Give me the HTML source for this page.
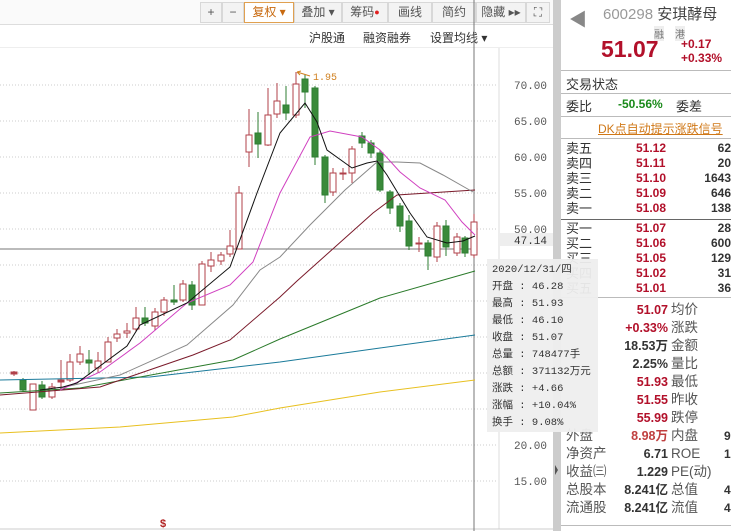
<!DOCTYPE html>
<html><head><meta charset="utf-8"><style>
*{margin:0;padding:0;box-sizing:border-box}
body{width:731px;height:531px;overflow:hidden;background:#fff;font-family:"Liberation Sans","Noto Sans CJK SC",sans-serif;position:relative;font-size:12px;color:#333}
.abs{position:absolute;white-space:nowrap}
.tb{position:absolute;top:0;left:0;width:553px;height:25px;background:#fafafa;border-bottom:1px solid #ddd}
.btn{position:absolute;top:2px;height:21px;border:1px solid #d8d8d8;background:#f3f3f3;font-size:12px;color:#555;text-align:center;line-height:19px}
.rp{position:absolute;left:560px;top:0;width:171px;height:531px;background:#fff;border-left:1px solid #ccc}
.r{color:#b2102a;font-weight:bold}
.g{color:#1a8a1a;font-weight:bold}
.hl{position:absolute;left:0;width:171px;border-top:1px solid #bbb}
.tip{position:absolute;z-index:5;left:487px;top:259px;width:111px;height:173px;background:rgba(238,238,238,.95);font-family:"Liberation Mono","Noto Sans CJK SC",monospace;font-size:10.5px;color:#333;padding:3px 0 0 5px;line-height:17px;white-space:nowrap}
</style></head><body>
<div class="tb"></div>
<div class="btn" style="left:200px;width:22px">+</div>
<div class="btn" style="left:222px;width:22px">−</div>
<div class="btn" style="left:244px;width:50px;border-color:#e0a050;background:#fff;color:#c86a10">复权 ▾</div>
<div class="btn" style="left:294px;width:48px">叠加 ▾</div>
<div class="btn" style="left:342px;width:46px">筹码<span style="color:#e02020;font-size:9px;vertical-align:top">●</span></div>
<div class="btn" style="left:388px;width:44px">画线</div>
<div class="btn" style="left:432px;width:44px">简约</div>
<div class="btn" style="left:476px;width:50px">隐藏 ▸▸</div>
<div class="btn" style="left:526px;width:24px">⛶</div>
<div class="abs" style="left:0;top:47px;width:553px;border-top:1px solid #eee"></div>
<div class="abs" style="left:309px;top:29px;font-size:12px;color:#333">沪股通</div>
<div class="abs" style="left:363px;top:29px;font-size:12px;color:#333">融资融券</div>
<div class="abs" style="left:430px;top:29px;font-size:12px;color:#333">设置均线 ▾</div>

<svg class="abs" style="left:0;top:0" width="560" height="531">
<g stroke="#ccc" stroke-dasharray="1,2" stroke-width="1">
<line x1="0" y1="85" x2="498" y2="85"/><line x1="0" y1="121" x2="498" y2="121"/><line x1="0" y1="157" x2="498" y2="157"/><line x1="0" y1="193" x2="498" y2="193"/><line x1="0" y1="229" x2="498" y2="229"/><line x1="0" y1="265" x2="498" y2="265"/><line x1="0" y1="301" x2="498" y2="301"/><line x1="0" y1="337" x2="498" y2="337"/><line x1="0" y1="373" x2="498" y2="373"/><line x1="0" y1="409" x2="498" y2="409"/><line x1="0" y1="445" x2="498" y2="445"/><line x1="0" y1="481" x2="498" y2="481"/>
</g>
<line x1="499" y1="48" x2="499" y2="529" stroke="#ddd"/>
<line x1="0" y1="529" x2="553" y2="529" stroke="#ccc"/>
<line x1="0" y1="249" x2="476" y2="249" stroke="#777"/>
<line x1="474" y1="0" x2="474" y2="531" stroke="#777"/>
<rect x="553" y="0" width="7" height="531" fill="#ccc"/>
<path d="M555 465 L558 470 L555 475Z" fill="#555"/>
<g stroke="#b0404a" fill="#fff">
<line x1="14" y1="371" x2="14" y2="376"/><rect x="11" y="372" width="6" height="2" fill="#b0404a"/>
<line x1="33" y1="384" x2="33" y2="410"/><rect x="30" y="384" width="6" height="26"/>
<line x1="52" y1="383" x2="52" y2="399"/><rect x="49" y="387" width="6" height="10"/>
<line x1="61" y1="360" x2="61" y2="390"/><rect x="58" y="380" width="6" height="2" fill="#b0404a"/>
<line x1="70" y1="354" x2="70" y2="382"/><rect x="67" y="362" width="6" height="18"/>
<line x1="80" y1="346" x2="80" y2="365"/><rect x="77" y="354" width="6" height="8"/>
<line x1="98" y1="352" x2="98" y2="373"/><rect x="95" y="361" width="6" height="7"/>
<line x1="108" y1="337" x2="108" y2="362"/><rect x="105" y="342" width="6" height="20"/>
<line x1="117" y1="329" x2="117" y2="342"/><rect x="114" y="334" width="6" height="4"/>
<line x1="127" y1="323" x2="127" y2="338"/><rect x="124" y="331" width="6" height="2"/>
<line x1="136" y1="307" x2="136" y2="332"/><rect x="133" y="318" width="6" height="11"/>
<line x1="155" y1="308" x2="155" y2="330"/><rect x="152" y="312" width="6" height="14"/>
<line x1="164" y1="297" x2="164" y2="316"/><rect x="161" y="300" width="6" height="12"/>
<line x1="183" y1="280" x2="183" y2="302"/><rect x="180" y="284" width="6" height="16"/>
<line x1="202" y1="261" x2="202" y2="305"/><rect x="199" y="264" width="6" height="41"/>
<line x1="211" y1="252" x2="211" y2="272"/><rect x="208" y="260" width="6" height="6"/>
<line x1="221" y1="252" x2="221" y2="265"/><rect x="218" y="255" width="6" height="6"/>
<line x1="230" y1="230" x2="230" y2="257"/><rect x="227" y="246" width="6" height="8"/>
<line x1="239" y1="186" x2="239" y2="249"/><rect x="236" y="193" width="6" height="56"/>
<line x1="249" y1="109" x2="249" y2="167"/><rect x="246" y="135" width="6" height="17"/>
<line x1="268" y1="88" x2="268" y2="146"/><rect x="265" y="115" width="6" height="30"/>
<line x1="277" y1="83" x2="277" y2="118"/><rect x="274" y="101" width="6" height="13"/>
<line x1="296" y1="72" x2="296" y2="118"/><rect x="293" y="84" width="6" height="31"/>
<line x1="333" y1="168" x2="333" y2="196"/><rect x="330" y="173" width="6" height="19"/>
<line x1="343" y1="168" x2="343" y2="180"/><rect x="340" y="173" width="6" height="1" fill="#b0404a"/>
<line x1="352" y1="146" x2="352" y2="183"/><rect x="349" y="149" width="6" height="24"/>
<line x1="419" y1="237" x2="419" y2="252"/><rect x="416" y="243" width="6" height="1" fill="#b0404a"/>
<line x1="437" y1="222" x2="437" y2="262"/><rect x="434" y="226" width="6" height="31"/>
<line x1="457" y1="233" x2="457" y2="256"/><rect x="454" y="237" width="6" height="16"/>
<line x1="474" y1="214" x2="474" y2="258"/><rect x="471" y="222" width="6" height="33"/>
</g>
<g stroke="#2e7d32" fill="#3a8a3a">
<line x1="23" y1="378" x2="23" y2="392"/><rect x="20" y="380" width="6" height="10"/>
<line x1="42" y1="381" x2="42" y2="399"/><rect x="39" y="385" width="6" height="12"/>
<line x1="89" y1="350" x2="89" y2="375"/><rect x="86" y="360" width="6" height="3"/>
<line x1="145" y1="307" x2="145" y2="326"/><rect x="142" y="318" width="6" height="5"/>
<line x1="174" y1="285" x2="174" y2="305"/><rect x="171" y="300" width="6" height="2"/>
<line x1="192" y1="281" x2="192" y2="310"/><rect x="189" y="285" width="6" height="20"/>
<line x1="258" y1="112" x2="258" y2="158"/><rect x="255" y="133" width="6" height="11"/>
<line x1="286" y1="86" x2="286" y2="120"/><rect x="283" y="105" width="6" height="8"/>
<line x1="305" y1="74" x2="305" y2="108"/><rect x="302" y="79" width="6" height="13"/>
<line x1="315" y1="86" x2="315" y2="165"/><rect x="312" y="88" width="6" height="69"/>
<line x1="325" y1="155" x2="325" y2="203"/><rect x="322" y="157" width="6" height="38"/>
<line x1="362" y1="132" x2="362" y2="148"/><rect x="359" y="136" width="6" height="7"/>
<line x1="371" y1="140" x2="371" y2="158"/><rect x="368" y="143" width="6" height="10"/>
<line x1="380" y1="150" x2="380" y2="192"/><rect x="377" y="153" width="6" height="37"/>
<line x1="390" y1="190" x2="390" y2="214"/><rect x="387" y="192" width="6" height="16"/>
<line x1="400" y1="203" x2="400" y2="232"/><rect x="397" y="206" width="6" height="20"/>
<line x1="409" y1="215" x2="409" y2="250"/><rect x="406" y="221" width="6" height="25"/>
<line x1="428" y1="240" x2="428" y2="270"/><rect x="425" y="243" width="6" height="13"/>
<line x1="446" y1="220" x2="446" y2="256"/><rect x="443" y="226" width="6" height="21"/>
<line x1="465" y1="236" x2="465" y2="257"/><rect x="462" y="238" width="6" height="15"/>
</g>
<g fill="none" stroke-width="1">
<polyline stroke="#e8c020" points="0,433 120,427 233,417 280,408 380,392 475,380"/>
<polyline stroke="#1a7a9a" points="0,380 150,377 280,362 380,348 475,335"/>
<polyline stroke="#2a7a2a" points="0,393 80,388 233,360 280,339 380,298 475,271"/>
<polyline stroke="#7a1a2a" points="0,395 100,387 193,355 230,340 280,297 297,281 373,213 397,195 475,190"/>
<polyline stroke="#888" points="60,388 120,375 187,345 233,305 260,270 280,257 310,225 345,190 377,162 397,162 420,163 443,175 473,192"/>
<polyline stroke="#d040c0" points="60,390 100,372 140,343 187,303 230,285 253,262 280,193 310,137 330,131 362,137 380,150 400,172 420,188 445,200 462,222 475,235"/>
<polyline stroke="#111" points="40,390 63,387 77,383 127,346 140,325 187,303 230,267 257,193 280,133 305,103 317,122 327,150 352,168 367,163 377,161 387,175 410,213 427,237 447,243 463,241 475,236"/>
</g>
<path d="M297 72 L310 76" stroke="#d08020" fill="none"/><path d="M297 72 l4 -1 M297 72 l3 3" stroke="#d08020"/>
<text x="313" y="80" font-size="10" fill="#d08020" font-family="Liberation Mono,monospace">1.95</text>
<g font-family="Liberation Mono,monospace" font-size="11" fill="#555">
<text x="514" y="89">70.00</text><text x="514" y="125">65.00</text><text x="514" y="161">60.00</text><text x="514" y="197">55.00</text><text x="514" y="233">50.00</text>
<rect x="500" y="233" width="53" height="13" fill="#eee"/><text x="514" y="244" fill="#333">47.14</text>
<text x="514" y="449">20.00</text><text x="514" y="485">15.00</text>
</g>
<text x="160" y="527" font-size="11" font-weight="bold" fill="#b02020">$</text>
</svg>

<div class="rp">
<div class="abs" style="left:8px;top:6px;font-size:18px;color:#888">◀</div>
<div class="abs" style="left:42px;top:3px;font-size:15px;color:#999">600298 <span style="color:#444">安琪酵母</span></div>
<div class="abs" style="left:93px;top:26px;font-size:10px;color:#777;background:#eee">融</div>
<div class="abs" style="left:114px;top:26px;font-size:10px;color:#777;background:#eee">港</div>
<div class="abs r" style="left:40px;top:36px;font-size:23px">51.07</div>
<div class="abs r" style="left:120px;top:37px;font-size:12px;line-height:14px">+0.17<br>+0.33%</div>
<div class="hl" style="top:70px"></div>
<div class="abs" style="left:5px;top:74px;font-size:13px">交易状态</div>
<div class="hl" style="top:93px"></div>
<div class="abs" style="left:5px;top:96px;font-size:13px">委比</div>
<div class="abs g" style="left:57px;top:97px;font-size:12px">-50.56%</div>
<div class="abs" style="left:115px;top:96px;font-size:13px">委差</div>
<div class="hl" style="top:116px"></div>
<div class="abs" style="left:37px;top:120px;font-size:12px;color:#d07818;text-decoration:underline">DK点自动提示涨跌信号</div>
<div class="hl" style="top:138px"></div>
<div class="abs" style="left:5px;top:141px;font-size:13px;line-height:15px">卖五<br>卖四<br>卖三<br>卖二<br>卖一</div>
<div class="abs r" style="left:75px;top:141px;font-size:12px;line-height:15px">51.12<br>51.11<br>51.10<br>51.09<br>51.08</div>
<div class="abs" style="right:0;top:141px;font-size:12px;line-height:15px;text-align:right;font-weight:bold;color:#333">62<br>20<br>1643<br>646<br>138</div>
<div class="hl" style="top:219px;border-color:#666"></div>
<div class="abs" style="left:5px;top:221px;font-size:13px;line-height:15px">买一<br>买二<br>买三<br>买四<br>买五</div>
<div class="abs r" style="left:75px;top:221px;font-size:12px;line-height:15px">51.07<br>51.06<br>51.05<br>51.02<br>51.01</div>
<div class="abs" style="right:0;top:221px;font-size:12px;line-height:15px;text-align:right;font-weight:bold;color:#333">28<br>600<br>129<br>31<br>36</div>
<div class="hl" style="top:297px"></div>
<div class="abs" style="right:63px;top:301px;font-size:12.5px;line-height:18px;text-align:right;font-weight:bold"><span class="r">51.07</span><br><span class="r">+0.33%</span><br><span style="color:#333">18.53万</span><br><span style="color:#333">2.25%</span><br><span class="r">51.93</span><br><span class="r">51.55</span><br><span class="r">55.99</span><br><span style="color:#c04040">8.98万</span><br><span style="color:#333">6.71</span><br><span style="color:#333">1.229</span><br><span style="color:#333">8.241亿</span><br><span style="color:#333">8.241亿</span></div>
<div class="abs" style="left:5px;top:427px;font-size:13.5px;line-height:18px;color:#555">外盘<br>净资产<br>收益㈢<br>总股本<br>流通股</div>
<div class="abs" style="left:110px;top:301px;font-size:13.5px;line-height:18px;color:#555">均价<br>涨跌<br>金额<br>量比<br>最低<br>昨收<br>跌停<br>内盘<br>ROE<br>PE(动)<br>总值<br>流值</div>
<div class="abs" style="left:163px;top:427px;font-size:12px;line-height:18px;font-weight:bold;color:#333">9<br>1<br><br>42<br>42</div>
<div class="hl" style="top:525px"></div>
</div>

<div class="tip">2020/12/31/四<br>开盘 : 46.28<br>最高 : 51.93<br>最低 : 46.10<br>收盘 : 51.07<br>总量 : 748477手<br>总额 : 371132万元<br>涨跌 : +4.66<br>涨幅 : +10.04%<br>换手 : 9.08%</div>
</body></html>
